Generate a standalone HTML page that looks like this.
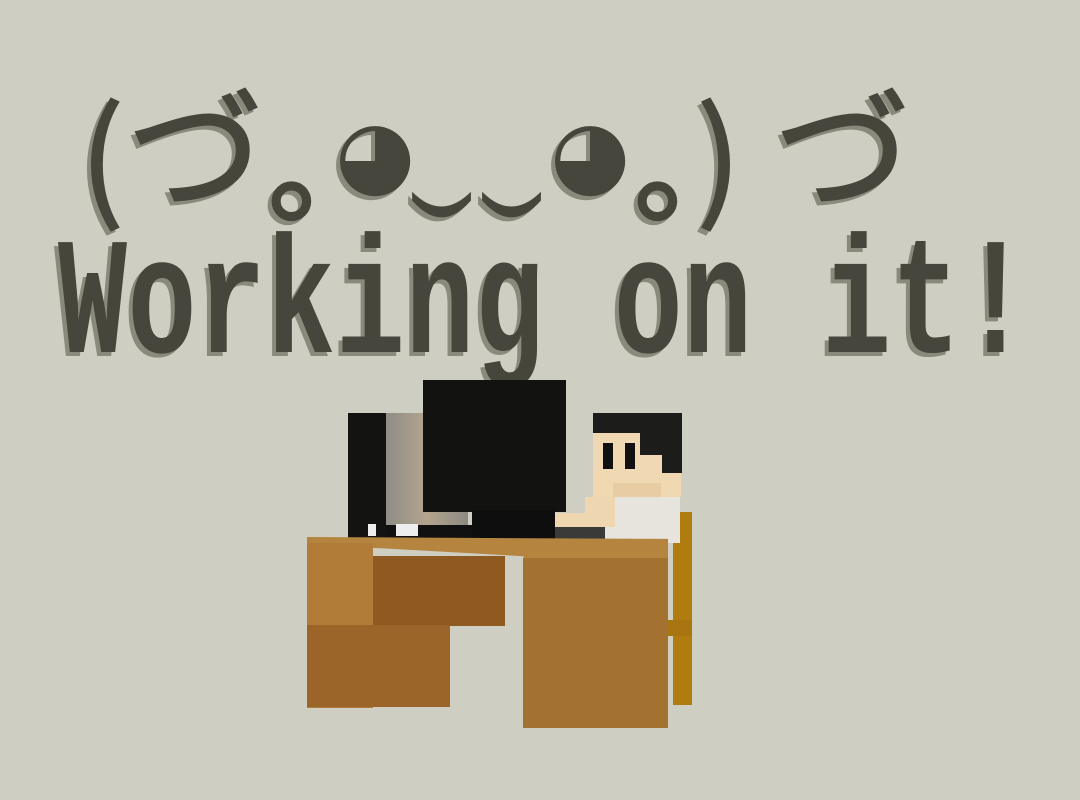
<!DOCTYPE html>
<html><head><meta charset="utf-8"><style>
html,body{margin:0;padding:0;}
body{width:1080px;height:800px;background:#cfcec3;position:relative;overflow:hidden;}
.a{position:absolute;}
svg{position:absolute;left:0;top:0;}
</style></head><body>
<svg width="1080" height="380" viewBox="0 0 1080 380">
<defs>
<g id="kao">
<text x="80" y="205" font-family="Noto Sans CJK JP, sans-serif" font-size="130" stroke="currentColor" stroke-width="2">(</text>
<text x="128" y="200" font-family="Noto Sans CJK JP, sans-serif" font-size="135" stroke="currentColor" stroke-width="2">づ</text>
<text x="269" y="212" font-family="Noto Sans CJK JP, sans-serif" font-size="120" stroke="currentColor" stroke-width="3">｡</text>
<text x="335" y="185" font-family="DejaVu Sans, sans-serif" font-size="92">◕</text>
<g transform="translate(415,183) scale(1,2.2)"><text x="0" y="0" font-family="DejaVu Sans, sans-serif" font-size="66">‿</text></g>
<g transform="translate(485,183) scale(1,2.2)"><text x="0" y="0" font-family="DejaVu Sans, sans-serif" font-size="66">‿</text></g>
<text x="550" y="185" font-family="DejaVu Sans, sans-serif" font-size="92">◕</text>
<text x="635" y="212" font-family="Noto Sans CJK JP, sans-serif" font-size="120" stroke="currentColor" stroke-width="3">｡</text>
<text x="697" y="205" font-family="Noto Sans CJK JP, sans-serif" font-size="130" stroke="currentColor" stroke-width="2">)</text>
<text x="775" y="200" font-family="Noto Sans CJK JP, sans-serif" font-size="135" stroke="currentColor" stroke-width="2">づ</text>
</g>
<g id="work">
<g transform="translate(0,352) scale(1,1.45)"><text x="58" y="0" font-family="Liberation Mono, monospace" font-size="115" font-weight="bold" textLength="972" lengthAdjust="spacing">Working on it!</text></g>
</g>
</defs>
<g fill="#8a8a7c" color="#8a8a7c" transform="translate(-4,4)"><use href="#kao"/><use href="#work"/></g>
<g fill="#46463c" color="#46463c"><use href="#kao"/><use href="#work"/></g>
</svg>

<!-- chair -->
<div class="a" style="left:673px;top:512px;width:19px;height:193px;background:#b07c10"></div>
<div class="a" style="left:664px;top:620px;width:28px;height:16px;background:#a87510"></div>
<!-- person body -->
<div class="a" style="left:598px;top:497px;width:82px;height:46px;background:#e6e4dc"></div>
<div class="a" style="left:585px;top:497px;width:30px;height:30px;background:#eed6b0"></div>
<div class="a" style="left:525px;top:513px;width:60px;height:14px;background:#eed6b0"></div>
<!-- head -->
<div class="a" style="left:593px;top:413px;width:88px;height:84px;background:#f0d8b2"></div>
<div class="a" style="left:593px;top:413px;width:88px;height:20px;background:#1c1c1a"></div>
<div class="a" style="left:640px;top:413px;width:42px;height:60px;background:#1c1c1a"></div>
<div class="a" style="left:640px;top:455px;width:22px;height:20px;background:#f0d8b2"></div>
<div class="a" style="left:603px;top:443px;width:10px;height:26px;background:#111"></div>
<div class="a" style="left:625px;top:443px;width:10px;height:26px;background:#111"></div>
<div class="a" style="left:613px;top:483px;width:48px;height:14px;background:#e8cca4"></div>
<!-- tower -->
<div class="a" style="left:348px;top:413px;width:38px;height:125px;background:#131312"></div>
<div class="a" style="left:386px;top:413px;width:82px;height:112px;background:linear-gradient(90deg,#8f8d86,#b3a48e,#8d8a82)"></div>
<div class="a" style="left:386px;top:525px;width:90px;height:13px;background:#111"></div>
<div class="a" style="left:368px;top:524px;width:8px;height:12px;background:#eee"></div>
<div class="a" style="left:396px;top:524px;width:22px;height:12px;background:#eee"></div>
<!-- monitor -->
<div class="a" style="left:423px;top:380px;width:143px;height:132px;background:#121211"></div>
<div class="a" style="left:472px;top:510px;width:83px;height:33px;background:#0e0e0e"></div>
<div class="a" style="left:555px;top:527px;width:50px;height:14px;background:#3a3a38"></div>
<!-- desk -->
<div class="a" style="left:307px;top:537px;width:361px;height:24px;background:#b58540;clip-path:polygon(0 0,100% 8%,100% 100%,60% 100%,60% 80%,0 30%)"></div>
<div class="a" style="left:307px;top:543px;width:66px;height:165px;background:#b17c38"></div>
<div class="a" style="left:373px;top:556px;width:132px;height:70px;background:#8e5a22"></div>
<div class="a" style="left:307px;top:625px;width:143px;height:82px;background:#9b6529"></div>
<div class="a" style="left:523px;top:558px;width:145px;height:170px;background:#a47230"></div>
</body></html>
